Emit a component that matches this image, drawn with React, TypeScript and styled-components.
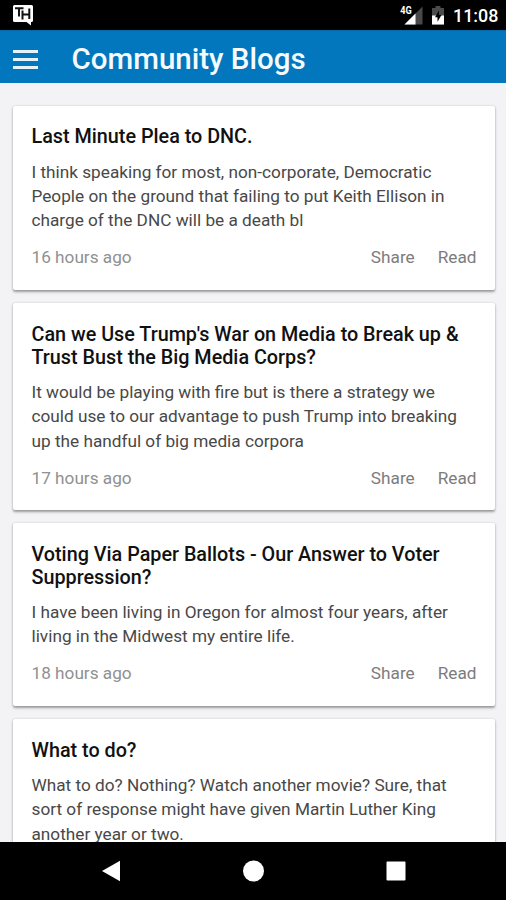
import React from "react";
import styled, { createGlobalStyle } from "styled-components";

const GlobalStyle = createGlobalStyle`
  html, body { margin: 0; padding: 0; }
  body { background: #f3f3f5; font-family: Roboto, "Liberation Sans", sans-serif; }
  * { box-sizing: border-box; }
`;

const Screen = styled.div`
  width: 506px;
  height: 900px;
  display: flex;
  flex-direction: column;
  overflow: hidden;
  background: #f3f3f5;
`;

const StatusBar = styled.div`
  height: 30px;
  flex: none;
  display: flex;
  align-items: center;
  justify-content: space-between;
  padding: 0 10px 0 12px;
  background: #000;
  color: #fff;
`;

const StatusIcons = styled.div`
  display: flex;
  align-items: center;
`;

const Clock = styled.span`
  margin-left: 9px;
  width: 43px;
  font-size: 17.9px;
  font-weight: 500;
  line-height: 30px;
  white-space: nowrap;
  padding-top: 2px;
`;

const Header = styled.header`
  height: 53px;
  flex: none;
  display: flex;
  align-items: center;
  padding-left: 12.5px;
  background: #0277bd;
  border-top: 1px solid #046aa9;
`;

const MenuButton = styled.button`
  width: 25px;
  height: 19px;
  margin-top: 4px;
  padding: 0;
  border: 0;
  background: none;
  display: flex;
  flex-direction: column;
  justify-content: space-between;
`;

const MenuLine = styled.span`
  width: 25px;
  height: 3px;
  background: #e6f1f8;
`;

const PageTitle = styled.h1`
  margin: 4px 0 0 34px;
  font-size: 29.5px;
  line-height: 40px;
  font-weight: 500;
  color: #f5fafd;
  white-space: nowrap;
`;

const Feed = styled.main`
  flex: 1;
  min-height: 0;
  overflow: hidden;
  display: flex;
  flex-direction: column;
  gap: 13px;
  padding: 23px 11px 0 13px;
`;

const Card = styled.article`
  flex: none;
  padding: 19.4px 18.5px 20.4px;
  border-radius: 2px;
  background: #fff;
  box-shadow: 0 1.5px 2.5px rgba(0, 0, 0, 0.36), 0 0 2px rgba(0, 0, 0, 0.08);
`;

const CardTitle = styled.h2`
  margin: 0 0 11.1px;
  font-size: 19.77px;
  line-height: 23.1px;
  font-weight: 500;
  color: #111;
  white-space: pre;
`;

const Excerpt = styled.p`
  margin: 0 0 12.3px;
  font-size: 17.22px;
  line-height: 24.45px;
  color: #484848;
  white-space: pre;
`;

const CardFooter = styled.footer`
  display: flex;
  align-items: center;
  height: 24.5px;
  font-size: 17.2px;
  color: #909090;
`;

const Age = styled.span`
  flex: 1;
`;

const Action = styled.a`
  margin-left: 23px;
  color: #7c7c7c;
`;

const NavBar = styled.nav`
  height: 58px;
  flex: none;
  display: grid;
  grid-template-columns: 142px 142px 142px;
  justify-content: center;
  place-items: center;
  background: #000;
`;

const BatterySvg = styled.svg`
  margin-left: 8px;
`;

type Post = { title: string; text: string; age?: string };

const posts: Post[] = [
  {
    title: "Last Minute Plea to DNC.",
    text: "I think speaking for most, non-corporate, Democratic\nPeople on the ground that failing to put Keith Ellison in\ncharge of the DNC will be a death bl",
    age: "16 hours ago",
  },
  {
    title: "Can we Use Trump's War on Media to Break up &\nTrust Bust the Big Media Corps?",
    text: "It would be playing with fire but is there a strategy we\ncould use to our advantage to push Trump into breaking\nup the handful of big media corpora",
    age: "17 hours ago",
  },
  {
    title: "Voting Via Paper Ballots - Our Answer to Voter\nSuppression?",
    text: "I have been living in Oregon for almost four years, after\nliving in the Midwest my entire life.",
    age: "18 hours ago",
  },
  {
    title: "What to do?",
    text: "What to do? Nothing? Watch another movie? Sure, that\nsort of response might have given Martin Luther King\nanother year or two.",
  },
];

const AppBadge = () => (
  <svg width="22" height="22" viewBox="0 0 22 22">
    <path d="M2.500 1h17q1.500 0 1.500 1.500v14q0 1.500-1.500 1.500h-.5v3.500L14.500 18h-12Q1 18 1 16.500v-14Q1 1 2.500 1z" fill="#fff" />
    <path d="M3 4.300h8.500M7 4v8.500M10.500 6.500v9M17.300 4.500v10.500M10.500 10.500h7" stroke="#111" strokeWidth="2" fill="none" />
  </svg>
);

const SignalIcon = () => (
  <svg width="24" height="22" viewBox="0 0 24 22">
    <path d="M22.500 2.500v18H4.500z" fill="#484848" />
    <path d="M15.500 9.500v11H4.500z" fill="#fff" />
    <text x="0.300" y="10" fontSize="10.500" fontWeight="700" fill="#fff" fontFamily="Roboto, sans-serif" textLength="11.500" lengthAdjust="spacingAndGlyphs">4G</text>
  </svg>
);

const BatteryIcon = () => (
  <BatterySvg width="12" height="20" viewBox="0 0 12 20">
    <path d="M3.500 1h5v2H12v16.500H0V3h3.500z" fill="#4b4b4b" />
    <path d="M0 10.500h12v9H0z" fill="#fff" />
    <path d="M7 5.500 3 12.300h2.500v4.500l4-6.800H7z" fill="#000" />
  </BatterySvg>
);

export default function App() {
  return (
    <Screen>
      <GlobalStyle />
      <StatusBar>
        <AppBadge />
        <StatusIcons>
          <SignalIcon />
          <BatteryIcon />
          <Clock>11:08</Clock>
        </StatusIcons>
      </StatusBar>
      <Header>
        <MenuButton aria-label="Menu">
          <MenuLine />
          <MenuLine />
          <MenuLine />
        </MenuButton>
        <PageTitle>Community Blogs</PageTitle>
      </Header>
      <Feed>
        {posts.map((post) => (
          <Card key={post.title}>
            <CardTitle>{post.title}</CardTitle>
            <Excerpt>{post.text}</Excerpt>
            {post.age && (
              <CardFooter>
                <Age>{post.age}</Age>
                <Action>Share</Action>
                <Action>Read</Action>
              </CardFooter>
            )}
          </Card>
        ))}
      </Feed>
      <NavBar>
        <svg width="22" height="22" viewBox="0 0 22 22">
          <path d="M20 0.700v20.600L2 11z" fill="#fff" />
        </svg>
        <svg width="22" height="22" viewBox="0 0 22 22">
          <circle cx="11.500" cy="11" r="10.500" fill="#fff" />
        </svg>
        <svg width="22" height="22" viewBox="0 0 22 22">
          <rect x="2.500" y="1.500" width="19" height="19" rx="1" fill="#fff" />
        </svg>
      </NavBar>
    </Screen>
  );
}
